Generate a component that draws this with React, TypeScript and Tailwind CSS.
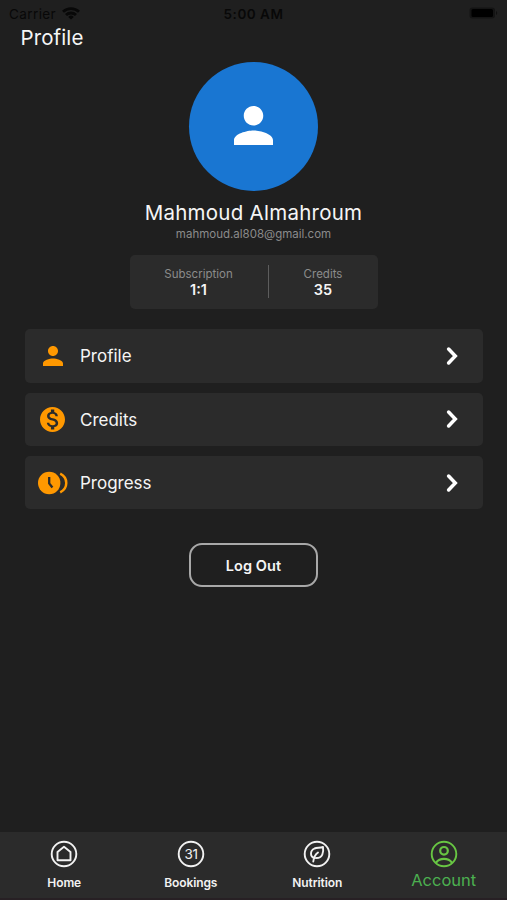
import React from "react";

function Person({ className }: { className: string }) {
  return (
    <svg viewBox="4 4 16 16" className={className} fill="currentColor">
      <path d="M12 12c2.21 0 4-1.79 4-4s-1.79-4-4-4-4 1.79-4 4 1.79 4 4 4zm0 2c-2.67 0-8 1.34-8 4v2h16v-2c0-2.66-5.33-4-8-4z" />
    </svg>
  );
}

function Dollar() {
  return (
    <svg viewBox="2 2 20 20" className="size-[25px]" fill="currentColor">
      <path d="M12 2C6.48 2 2 6.48 2 12s4.48 10 10 10 10-4.48 10-10S17.52 2 12 2zm1.41 16.09V20h-2.67v-1.93c-1.71-.36-3.16-1.46-3.27-3.4h1.96c.1 1.05.82 1.87 2.65 1.87 1.96 0 2.4-.98 2.4-1.59 0-.83-.44-1.61-2.67-2.14-2.48-.6-4.18-1.62-4.18-3.67 0-1.72 1.39-2.84 3.11-3.21V4h2.67v1.95c1.86.45 2.79 1.86 2.85 3.39H14.3c-.05-1.11-.64-1.87-2.22-1.87-1.5 0-2.4.68-2.4 1.64 0 .84.65 1.39 2.67 1.91s4.18 1.39 4.18 3.91c-.01 1.83-1.38 2.83-3.12 3.16z" />
    </svg>
  );
}

function ClockArc() {
  return (
    <svg viewBox="0 0 30 24" className="h-6 w-[30px]">
      <circle cx="11.2" cy="12" r="11.2" fill="currentColor" />
      <path d="M11.2 6v6.400l3.200 4.100" fill="none" stroke="#2b2b2b" strokeWidth="2.3" />
      <path d="M22.2 2.700C30.300 6.800 30.300 17.200 22.2 21.300" fill="none" stroke="currentColor" strokeWidth="2.5" />
    </svg>
  );
}

function Chevron() {
  return (
    <svg viewBox="0 0 12 20" className="h-5 w-3" fill="none" stroke="#fff" strokeWidth="3.5" strokeLinecap="round" strokeLinejoin="miter">
      <path d="M2.600 3L9.300 10l-6.700 7" />
    </svg>
  );
}

function Row({ icon, label }: { icon: React.ReactNode; label: string }) {
  return (
    <div className="flex h-[53.5px] items-center rounded-[5px] bg-[#2b2b2b] pr-[25px] pl-3">
      <div className="flex w-8 justify-center text-[#ff9800]">{icon}</div>
      <span className="ml-[11.5px] flex-1 pt-[2px] text-[17px] text-[#f5f5f5]">{label}</span>
      <Chevron />
    </div>
  );
}

function NavIcon({ children }: { children: React.ReactNode }) {
  return (
    <svg viewBox="0 0 28 28" className="size-7" fill="none" stroke="currentColor" strokeWidth="1.9" strokeLinejoin="round" strokeLinecap="round">
      <circle cx="14" cy="14" r="12.3" />
      {children}
    </svg>
  );
}

function Tab({ label, children }: { label: string; children: React.ReactNode }) {
  return (
    <div className="flex w-1/4 flex-col items-center text-[#f2f2f2]">
      <NavIcon>{children}</NavIcon>
      <span className="mt-[7px] text-[12px] leading-4 font-semibold tracking-[-0.1px]">{label}</span>
    </div>
  );
}

export default function App() {
  return (
    <div className="flex h-[900px] w-[507px] flex-col overflow-hidden bg-[#1f1f1f] font-[Inter,sans-serif]">
      <header className="grid h-[26px] grid-cols-3 items-center px-[9px] pt-[2px] text-[13.5px] text-[#080808]">
        <div className="flex items-center gap-[6px] tracking-[0.4px]">
          Carrier
          <svg viewBox="0 0 18 13" className="mb-[2px] h-[13px] w-[18px]" fill="none" stroke="currentColor" strokeWidth="2.8">
            <path d="M1 4.800a11.500 11.500 0 0 1 16 0M4 8a7.200 7.200 0 0 1 10 0" />
            <path d="M9 12.500L6.200 9.900a4 4 0 0 1 5.600 0z" fill="currentColor" stroke="none" />
          </svg>
        </div>
        <div className="text-center font-semibold tracking-[0.5px]">5:00 AM</div>
        <svg viewBox="0 0 29 12" className="mb-[2px] h-3 w-[29px] justify-self-end">
          <rect x="0.5" y="0.5" width="25.5" height="11" rx="3" fill="#141414" />
          <rect x="2.5" y="2" width="21.5" height="8" rx="1.5" fill="#000" />
          <path d="M27 4c1.600.6 1.600 3.400 0 4z" fill="#111" />
        </svg>
      </header>
      <h1 className="pl-[20.5px] text-[20.5px] leading-6 tracking-[0.1px] text-[#f5f5f5]">Profile</h1>

      <main className="flex flex-1 flex-col items-center">
        <div className="mt-[11.5px] flex size-[129px] items-center justify-center rounded-full bg-[#1976d2] text-white">
          <Person className="mb-px size-[39px]" />
        </div>
        <h2 className="mt-[10.4px] text-[20.5px] leading-6 tracking-[0.25px] text-[#f5f5f5]">Mahmoud Almahroum</h2>
        <p className="mt-[1.1px] text-[11.5px] leading-4 text-[#8b8b8b]">mahmoud.al808@gmail.com</p>

        <section className="mt-[13px] flex h-[54px] w-[248px] items-center rounded-[5px] bg-[#2b2b2b] text-center">
          <div className="w-[138px]">
            <div className="text-[11.5px] leading-4 text-[#8b8b8b]">Subscription</div>
            <div className="text-[14.5px] leading-4 font-semibold text-[#f5f5f5]">1:1</div>
          </div>
          <div className="h-[33px] w-px bg-[#5d5d5d]" />
          <div className="flex-1">
            <div className="text-[11.5px] leading-4 text-[#8b8b8b]">Credits</div>
            <div className="text-[14.5px] leading-4 font-semibold text-[#f5f5f5]">35</div>
          </div>
        </section>

        <section className="mt-[20.3px] flex w-[458px] flex-col gap-[9.75px]">
          <Row icon={<Person className="size-5" />} label="Profile" />
          <Row icon={<Dollar />} label="Credits" />
          <Row icon={<ClockArc />} label="Progress" />
        </section>

        <button className="mt-[33.7px] h-[44px] w-[129px] rounded-[13px] border-2 border-[#a8a8a8] pt-px text-[14.5px] font-semibold tracking-[0.1px] text-[#f5f5f5]">
          Log Out
        </button>
      </main>

      <nav className="flex h-[68px] border-b-2 border-[#272024] bg-[#2b2b2b] pt-2 pl-px">
        <Tab label="Home">
          <path d="M7.500 12L14 6.800l6.500 5.200V20.300h-13z" />
        </Tab>
        <Tab label="Bookings">
          <text x="14" y="19" textAnchor="middle" fontSize="13.5" letterSpacing="-0.5" fill="currentColor" stroke="none" fontFamily="Inter, sans-serif">31</text>
        </Tab>
        <Tab label="Nutrition">
          <path d="M12 18C6.500 17 7 10.500 11.500 8.500c2.500-1 5-.5 8.500-1.500.8 5.500-.5 11-6.500 11M10.300 21.500c.4-4 2-7 4.700-9" />
        </Tab>
        <div className="flex w-1/4 flex-col items-center">
          <div className="text-[#68c643]">
            <NavIcon>
              <circle cx="14" cy="10.800" r="3.800" strokeWidth="2.2" />
              <path d="M6.500 22.200c3-4.500 12-4.500 15 0" strokeWidth="2.2" />
            </NavIcon>
          </div>
          <span className="mt-[2px] text-[16.5px] leading-5 text-[#4caf50]">Account</span>
        </div>
      </nav>
    </div>
  );
}
